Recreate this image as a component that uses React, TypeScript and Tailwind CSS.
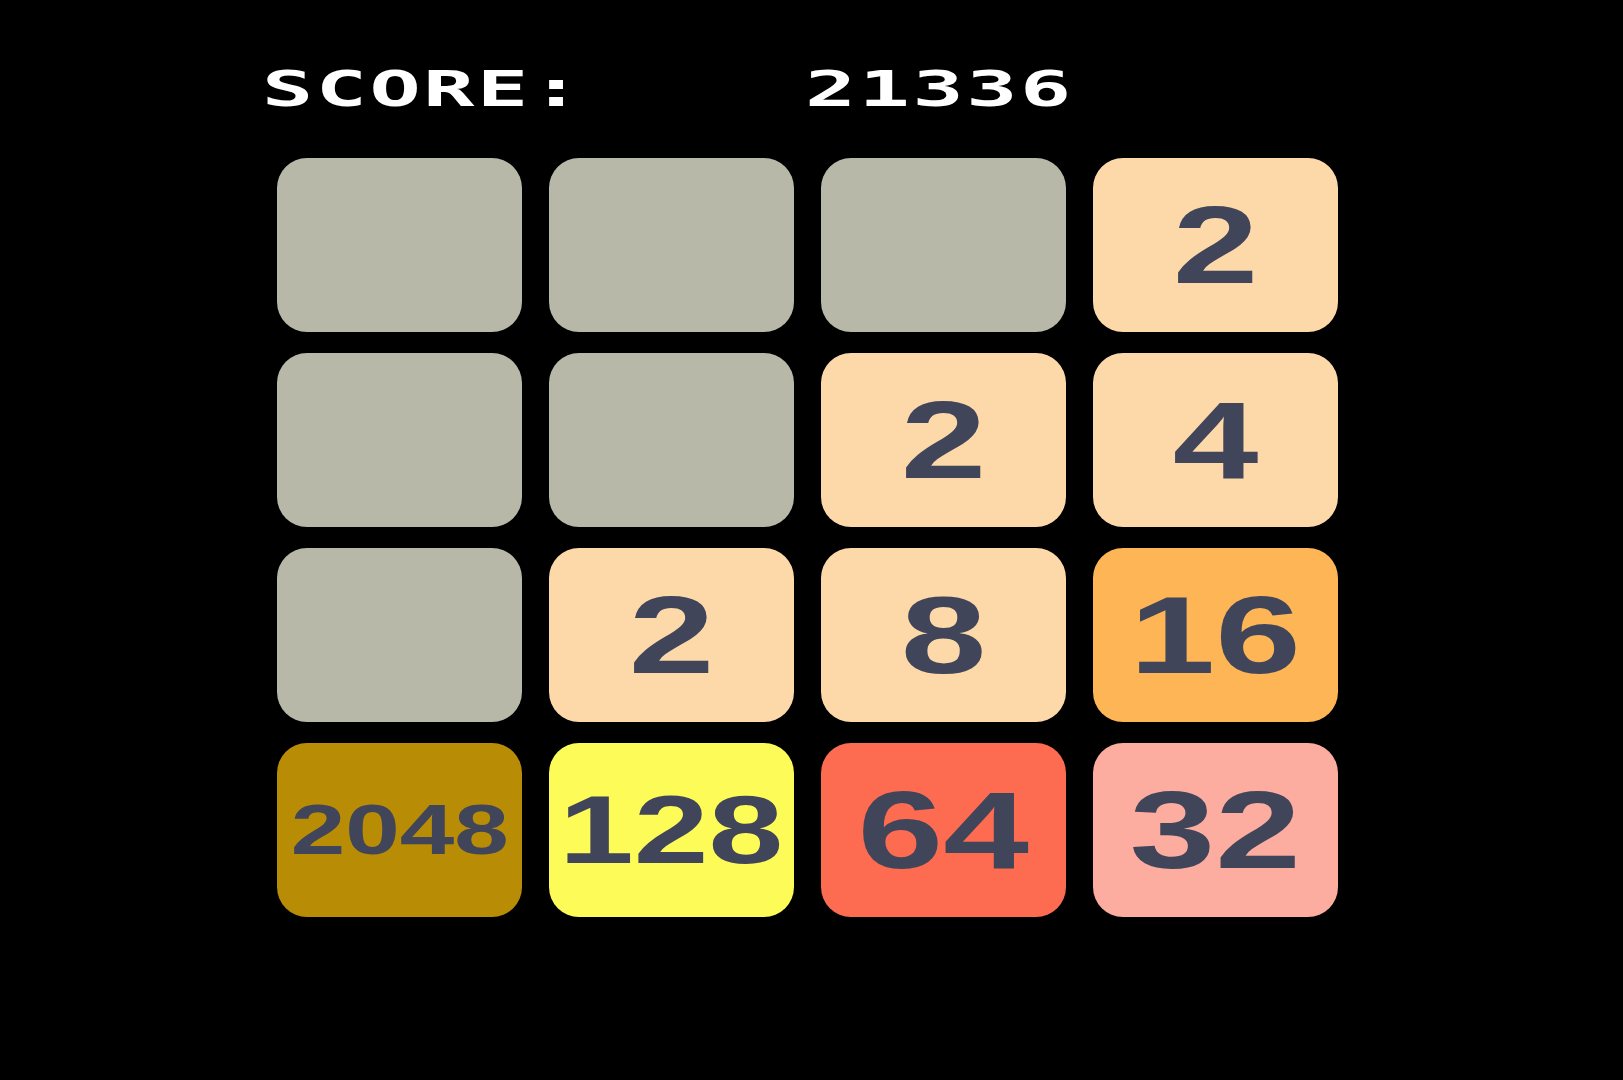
import { useState } from 'react';

type Cell = number | null;

// board state, top row first
const initialBoard: Cell[][] = [
  [null, null, null, 2],
  [null, null, 2, 4],
  [null, 2, 8, 16],
  [2048, 128, 64, 32],
];

const tileColors: Record<number, string> = {
  2: 'bg-[#fdd9aa]',
  4: 'bg-[#fdd9aa]',
  8: 'bg-[#fdd9aa]',
  16: 'bg-[#fdb556]',
  32: 'bg-[#fdaca0]',
  64: 'bg-[#fd6b50]',
  128: 'bg-[#fdfb58]',
  2048: 'bg-[#b88c05]',
};

const textSize = (value: number) => {
  if (value >= 1000) return 'text-[70px]';
  if (value >= 100) return 'text-[96px]';
  return 'text-[110px]';
};

const Tile = ({ value }: { value: Cell }) => {
  if (value === null) {
    return <div className="h-[174px] rounded-[30px] bg-[#b8b8a9]" />;
  }
  return (
    <div
      className={`h-[174px] rounded-[30px] flex items-center justify-center ${tileColors[value] ?? 'bg-[#fdd9aa]'}`}
    >
      <span
        className={`inline-block scale-x-[1.4] font-bold leading-none text-[#41455a] ${textSize(value)}`}
        style={{ fontFamily: '"Liberation Sans", Arial, sans-serif' }}
      >
        {value}
      </span>
    </div>
  );
};

const ScoreText = ({ children }: { children: React.ReactNode }) => (
  <span
    className="inline-block origin-left scale-x-[1.7] text-[50px] font-bold leading-none tracking-[1.5px] text-white"
    style={{ fontFamily: '"DejaVu Sans Mono", "Liberation Mono", monospace' }}
  >
    {children}
  </span>
);

export default function App() {
  const [board] = useState<Cell[][]>(initialBoard);
  const [score] = useState(21336);

  return (
    <div className="min-h-screen w-full bg-black">
      <div className="pl-[262px] pt-[64px]">
        <div className="flex items-start">
          <div className="w-[543px]">
            <ScoreText>SCORE:</ScoreText>
          </div>
          <ScoreText>{score}</ScoreText>
        </div>

        <div className="ml-[15px] mt-[44px] grid w-[1061px] grid-cols-4 gap-x-[27px] gap-y-[21px]">
          {board.flat().map((value, i) => (
            <Tile key={i} value={value} />
          ))}
        </div>
      </div>
    </div>
  );
}
